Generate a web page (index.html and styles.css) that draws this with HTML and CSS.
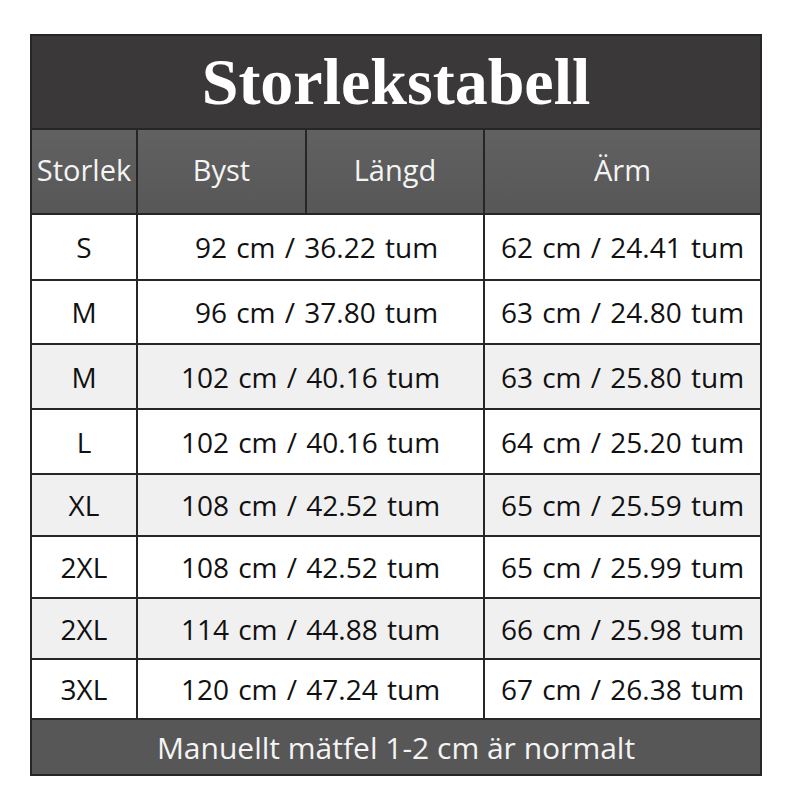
FILE: index.html
```html
<!DOCTYPE html>
<html lang="sv">
<head>
<meta charset="utf-8">
<title>Storlekstabell</title>
<link rel="stylesheet" href="styles.css">
</head>
<body>
<div class="chart">
  <div class="title">Storlekstabell</div>

  <div class="head">Storlek</div>
  <div class="head">Byst</div>
  <div class="head">Längd</div>
  <div class="head">Ärm</div>

  <div class="cell">S</div>
  <div class="cell wide shift">92 cm / 36.22 tum</div>
  <div class="cell">62 cm / 24.41 tum</div>

  <div class="cell">M</div>
  <div class="cell wide shift">96 cm / 37.80 tum</div>
  <div class="cell">63 cm / 24.80 tum</div>

  <div class="cell alt">M</div>
  <div class="cell alt wide">102 cm / 40.16 tum</div>
  <div class="cell alt">63 cm / 25.80 tum</div>

  <div class="cell">L</div>
  <div class="cell wide">102 cm / 40.16 tum</div>
  <div class="cell">64 cm / 25.20 tum</div>

  <div class="cell alt">XL</div>
  <div class="cell alt wide">108 cm / 42.52 tum</div>
  <div class="cell alt">65 cm / 25.59 tum</div>

  <div class="cell">2XL</div>
  <div class="cell wide">108 cm / 42.52 tum</div>
  <div class="cell">65 cm / 25.99 tum</div>

  <div class="cell alt">2XL</div>
  <div class="cell alt wide">114 cm / 44.88 tum</div>
  <div class="cell alt">66 cm / 25.98 tum</div>

  <div class="cell">3XL</div>
  <div class="cell wide">120 cm / 47.24 tum</div>
  <div class="cell">67 cm / 26.38 tum</div>

  <div class="foot">Manuellt mätfel 1-2 cm är normalt</div>
</div>
</body>
</html>
```
FILE: styles.css
```css
html, body {
  margin: 0;
  padding: 0;
  background: #ffffff;
}

body {
  padding: 34px 0 0 30px;
  font-family: "Open Sans", "Liberation Sans", sans-serif;
}

.chart {
  width: 728px;
  padding: 2px;
  background: #262626;
  display: grid;
  grid-template-columns: 104px 167px 176px 275px;
  grid-template-rows: 92px 83px 64px 62px 63px 63px 60px 60px 59px 58px 54px;
  gap: 2px;
}

.title {
  grid-column: 1 / -1;
  background: #3b3839;
  color: #ffffff;
  font-family: "Liberation Serif", "Times New Roman", serif;
  font-weight: bold;
  font-size: 66px;
  display: flex;
  align-items: center;
  justify-content: center;
}

.head {
  background: linear-gradient(#616161, #575757);
  color: #f4f4f4;
  font-size: 29px;
  display: flex;
  align-items: center;
  justify-content: center;
  padding-bottom: 4px;
}

.cell {
  background: #ffffff;
  color: #111111;
  font-size: 28px;
  word-spacing: 2px;
  display: flex;
  align-items: center;
  justify-content: center;
  white-space: nowrap;
}

.cell.alt {
  background: #f0f0f0;
}

.wide {
  grid-column: span 2;
}

.shift {
  padding-left: 12px;
}

.foot {
  grid-column: 1 / -1;
  background: #575757;
  color: #f4f4f4;
  font-size: 30px;
  display: flex;
  align-items: center;
  justify-content: center;
}
```
